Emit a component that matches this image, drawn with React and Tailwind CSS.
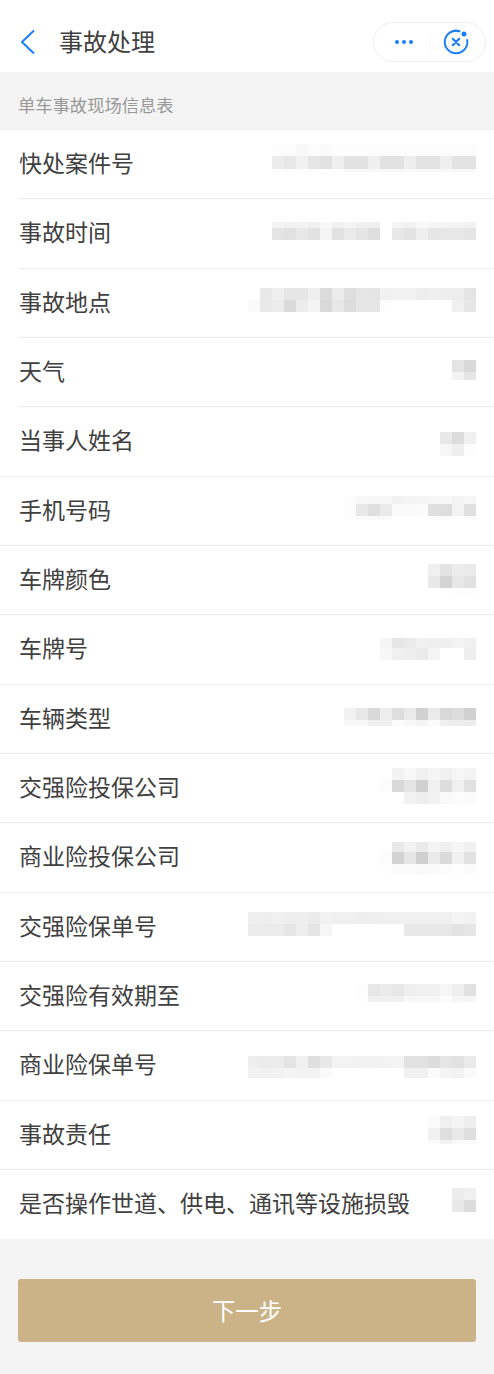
import React from 'react';

// each blurred value: top offset inside the row, then bands of [height, grey cells]
const rows = [
    { label: '快处案件号', top: 14, blur: [[12, 'fc fc f8 fc fa fd fd fd fc fc fc fc fc fc fc fc fc'], [13, 'ec e7 f1 e6 e1 ef e2 e2 ef e2 e2 ee e3 e3 ef e3 e3'], [3, 'fc fc fd fd . . f8 f8 f8 f8 f8 f8 f8 f8 f8 f8 f8']] },
    { label: '事故时间', top: 22.65, blur: [[6, 'f3 f1 f3 f0 f8 f0 f4 f0 ef . f4 f1 f9 f5 f5 f5 f2'], [12, 'e4 e1 e8 e2 f5 e2 ea e5 df . e8 e3 ef e6 e7 e8 e5']] },
    { label: '事故地点', top: 19.3, blur: [[12, '. e8 ef e6 e6 ef dc ec df e6 e5 f1 f2 f2 ed ef ee ed e4'], [12, 'fa e9 ec da ec f4 da e8 dd e6 e6 fe . . . . . f0 e6']] },
    { label: '天气', top: 22, blur: [[12, 'e4 d9'], [8, 'f3 e6']] },
    { label: '当事人姓名', top: 24.6, blur: [[12, 'e8 dc f0'], [12, 'f6 ee fd']] },
    { label: '手机号码', top: 19.25, blur: [[8, 'fc f8 f7 f7 f1 f4 f5 f7 f7 f3 f6'], [12, 'fc e8 e0 ea fa fa fb df de f3 e0'], [4, 'fd fa fa fa . . . fb fb fd fb']] },
    { label: '车牌颜色', top: 17.9, blur: [[12, 'f0 e3 ec ea'], [12, 'e8 d4 e8 e1'], [10, '. . fe fe']] },
    { label: '车牌号', top: 22.55, blur: [[10, 'f5 e6 ea f1 ef ef f3 f0'], [12, 'f7 f0 ee eb f5 . . ee']] },
    { label: '车辆类型', top: 23.2, blur: [[12, 'f2 e8 d9 ed de ea d1 ea d8 dd d1'], [6, 'f8 f8 ef ef fc f8 f4 fb f0 ee ec']] },
    { label: '交强险投保公司', top: 13.85, blur: [[12, '. f2 f8 f0 f5 f0 f6 f3'], [12, 'fc d8 e5 d0 f0 dd f0 e1'], [12, '. . f2 ee f2 f9 fc fb']] },
    { label: '商业险投保公司', top: 18.5, blur: [[10, '. e9 f2 ea f4 ef f6 f0'], [12, 'fc d3 e6 d0 ea da f0 e2'], [10, 'fe fb fb f9 fa fc fe fb']] },
    { label: '交强险保单号', top: 19.15, blur: [[12, 'ef ee f0 ee ee eb f2 f0 f0 ee ef f0 f0 f0 f0 f0 f0 f4 f2'], [12, 'ec ec ec e6 ed e5 f6 . . . . . . e8 e8 e8 e8 e3 e6']] },
    { label: '交强险有效期至', top: 21.8, blur: [[12, 'fd e7 eb e7 ef f0 f1 f6 ef e1'], [6, 'fe f0 f0 f0 f7 f7 f7 fb f7 f5']] },
    { label: '商业险保单号', top: 24.45, blur: [[12, 'ee ec ec e4 f0 df e8 f3 f3 f2 f2 f3 f4 e2 e2 dc e6 e2 ea'], [10, 'f1 f1 f2 f4 f3 f3 fa . . . . . . f1 f1 fb f4 f2 fa']] },
    { label: '事故责任', top: 15.1, blur: [[12, 'fb f0 f4 ee'], [12, 'f1 de e9 df'], [4, 'fb f3 fa f9']] },
    { label: '是否操作世道、供电、通讯等设施损毁', top: 17.75, blur: [[12, 'ec f0'], [12, 'e8 dc']] },
];

const BlurredValue = ({ top, bands }) => (
    <div className="flex flex-col items-end" style={{ marginTop: top }}>
        {bands.map(([height, cells], i) => (
            <div key={i} className="flex" style={{ height }}>
                {cells.split(' ').map((c, j) => (
                    <div key={j} className="w-3" style={{ background: c === '.' ? 'transparent' : `#${c}${c}${c}` }} />
                ))}
            </div>
        ))}
    </div>
);

const CapsuleClose = () => (
    <svg width="28" height="28" viewBox="0 0 28 28" fill="none" stroke="#1a7dfa" strokeWidth="2" strokeLinecap="round">
        <path d="M17.5 3.2 A11.3 11.3 0 1 0 25.2 12" />
        <path d="M10.8 10.8 L17.2 17.2 M17.2 10.8 L10.8 17.2" strokeWidth="2.2" />
        <circle cx="22" cy="6" r="2.5" fill="#1a7dfa" stroke="none" />
    </svg>
);

const App = () => {
    return (
        <div className="w-[494px] h-[1374px] overflow-hidden bg-[#f4f4f4] text-[#404040] font-['Noto_Sans_CJK_SC','Noto_Sans',sans-serif]">
            {/* Nav bar */}
            <div className="h-[72px] bg-white flex items-center pt-[11px] pl-[19px] pr-2">
                <svg width="18" height="26" viewBox="0 0 18 26" fill="none" stroke="#1a7dfa" strokeWidth="2" className="mr-[22px] shrink-0">
                    <path d="M15 1.5 L3 13 L15 24.5" />
                </svg>
                <h1 className="text-[24px] leading-none tracking-normal font-normal flex-1 mb-[1px]">事故处理</h1>
                <div className="w-[113px] h-[40px] mt-[1px] rounded-full border border-[#eeeeee] flex items-center bg-white">
                    <div className="w-[56px] flex justify-center gap-[3px] pl-[4px]">
                        <span className="w-1 h-1 rounded-full bg-[#1a7dfa]" />
                        <span className="w-1 h-1 rounded-full bg-[#1a7dfa]" />
                        <span className="w-1 h-1 rounded-full bg-[#1a7dfa]" />
                    </div>
                    <div className="w-px h-[22px] bg-[#f6f6f6]" />
                    <div className="flex-1 flex justify-center pr-[5px]">
                        <CapsuleClose />
                    </div>
                </div>
            </div>

            {/* Section title */}
            <div className="h-[58px] pl-[18px] pt-[21px] text-[17.3px] leading-[24px] text-[#999999] border-b border-[#ececec]">
                单车事故现场信息表
            </div>

            {/* Info rows, the divider only reaches the left edge from the fifth row on */}
            <div className="bg-white">
                {rows.map((row, i) => (
                    <div key={row.label} className={`${i === rows.length - 1 ? 'h-[68.5px]' : 'h-[69.35px]'} ${i < 4 ? 'pl-[18px]' : ''}`}>
                        <div className={`h-full flex justify-between pr-[18px] ${i < rows.length - 1 ? 'border-b border-[#ececec]' : ''}`}>
                            <span className={`text-[23px] leading-[65px] whitespace-nowrap ${i < 4 ? 'pl-px' : 'pl-[19px]'}`}>{row.label}</span>
                            <BlurredValue top={row.top} bands={row.blur} />
                        </div>
                    </div>
                ))}
            </div>

            {/* Next button */}
            <div className="px-[18px] pt-[40px]">
                <button className="w-full h-[63px] rounded-[3px] bg-[#cbb387] text-white text-[23.4px]">下一步</button>
            </div>
        </div>
    );
};

export default App;
